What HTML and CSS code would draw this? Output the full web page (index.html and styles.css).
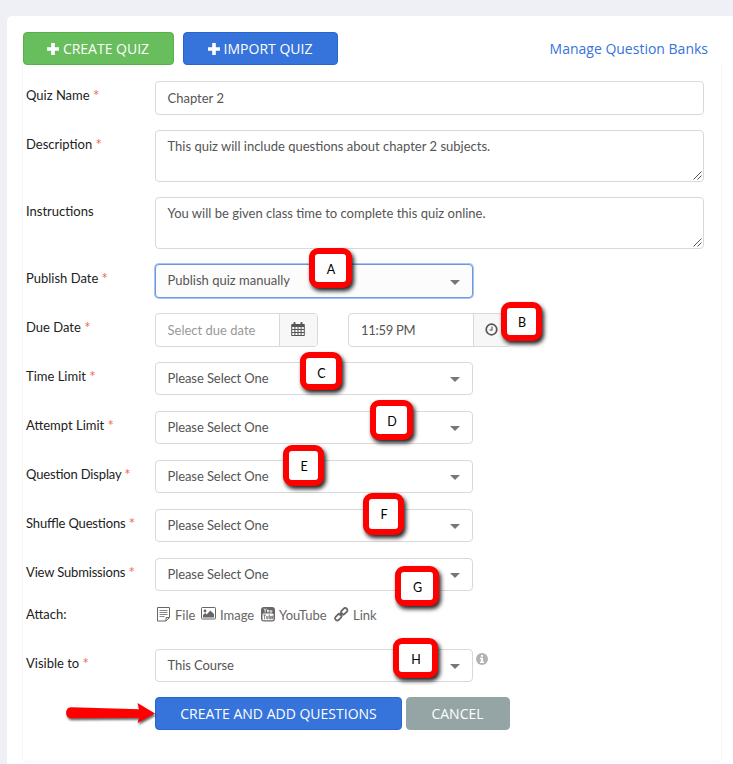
FILE: index.html
```html
<!DOCTYPE html>
<html lang="en">
<head>
<meta charset="utf-8">
<title>Create Quiz</title>
<link rel="stylesheet" href="styles.css">
</head>
<body>
<main class="card">
  <header class="toolbar">
    <button class="btn green create"><svg class="plus" viewBox="0 0 12 12"><path d="M4.2 0h3.6v4.2H12v3.6H7.8V12H4.2V7.8H0V4.2h4.2z"/></svg><span>CREATE QUIZ</span></button>
    <button class="btn blue import"><svg class="plus" viewBox="0 0 12 12"><path d="M4.2 0h3.6v4.2H12v3.6H7.8V12H4.2V7.8H0V4.2h4.2z"/></svg><span>IMPORT QUIZ</span></button>
    <a class="manage">Manage Question Banks</a>
  </header>
  <form class="panel">
    <div class="row"><label>Quiz Name <i>*</i></label><div class="field wide"><span>Chapter 2</span></div></div>
    <div class="row tall"><label>Description <i>*</i></label><div class="field wide area"><span>This quiz will include questions about chapter 2 subjects.</span><svg class="grip" viewBox="0 0 9 9"><path d="M.5 8.500l8-8M4.500 8.500l4-4"/></svg></div></div>
    <div class="row tall"><label>Instructions</label><div class="field wide area"><span>You will be given class time to complete this quiz online.</span><svg class="grip" viewBox="0 0 9 9"><path d="M.5 8.500l8-8M4.500 8.500l4-4"/></svg></div></div>
    <div class="row"><label>Publish Date <i>*</i></label><div class="field select focus"><span>Publish quiz manually</span><b class="caret"></b></div></div>
    <div class="row"><label>Due Date <i>*</i></label>
      <div class="group date"><span class="hint">Select due date</span><div class="addon"><svg width="14" height="14" viewBox="0 0 14 14"><path fill="#555" fill-rule="evenodd" d="M1 2h1.500V.8q0-.8 1-.8t1 .8V2h5V.8q0-.8 1-.8t1 .8V2H13q.8 0 .8.8v10.400q0 .8-.8.8H1q-.8 0-.8-.8V2.800Q.2 2 1 2zM1.200 5v2h2.200V5zm3.200 0v2h2.100V5zm3.100 0v2h2.100V5zm3.100 0v2h2.200V5zM1.200 8v2h2.200V8zm3.200 0v2h2.100V8zm3.100 0v2h2.100V8zm3.100 0v2h2.200V8zM1.200 11v2h2.200v-2zm3.200 0v2h2.100v-2zm3.100 0v2h2.100v-2zm3.100 0v2h2.200v-2z"/></svg></div></div>
      <div class="group time"><span class="clock">11:59 PM</span><div class="addon"><svg width="13" height="13" viewBox="0 0 13 13" fill="none" stroke="#555"><circle cx="6.500" cy="6.500" r="5.300" stroke-width="1.700"/><path d="M7 3.500v3.500H4.500" stroke-width="1.100"/></svg></div></div>
    </div>
    <div class="row"><label>Time Limit <i>*</i></label><div class="field select"><span>Please Select One</span><b class="caret"></b></div></div>
    <div class="row"><label>Attempt Limit <i>*</i></label><div class="field select"><span>Please Select One</span><b class="caret"></b></div></div>
    <div class="row"><label class="snug">Question Display <i>*</i></label><div class="field select"><span>Please Select One</span><b class="caret"></b></div></div>
    <div class="row"><label class="snug">Shuffle Questions <i>*</i></label><div class="field select"><span>Please Select One</span><b class="caret"></b></div></div>
    <div class="row"><label class="snug">View Submissions <i>*</i></label><div class="field select"><span>Please Select One</span><b class="caret"></b></div></div>
    <div class="row attach"><label>Attach:</label>
      <div class="links">
        <a class="file"><svg width="14" height="15" viewBox="0 0 14 15" fill="none" stroke="#666"><path d="M.5.5h12v10l-3.500 3.500H.5zM12.500 10.500H9V14"/><path d="M2.500 3.500h8M2.500 5.500h8M2.500 7.500h8M2.500 9.500h5" stroke="#888"/></svg><span>File</span></a>
        <a class="image"><svg width="15" height="13" viewBox="0 0 15 13"><rect x=".5" y=".5" width="14" height="11.500" rx=".7" fill="#fff" stroke="#666"/><circle cx="4" cy="4" r="1.400" fill="#666"/><path fill="#666" d="M2 10.500V8l2.200-2 1.500 1.500L9.300 3.500 13 7v3.500z"/></svg><span>Image</span></a>
        <a class="youtube"><svg width="14" height="15" viewBox="0 0 14 15"><rect width="14" height="14.500" rx="3" fill="#666"/><path d="M3 1.500l1.200 2 1.200-2M4.200 3.500v2M6.500 3v2h1.200V3zM9.300 3v2.200h1.500V3" fill="none" stroke="#fff" stroke-width=".8"/><rect x="1.500" y="6.500" width="11" height="6.800" rx="1" fill="#fff"/><path d="M2.300 8H5M3.600 8v4.300M5.700 9v2.800h1.200V9M8.200 7.300v4.500h1.300V9.300H8.200M12 11.800h-1.300V9.200H12v1.300h-1.300" fill="none" stroke="#666" stroke-width=".8"/></svg><span>YouTube</span></a>
        <a class="link"><svg width="15" height="15" viewBox="0 0 15 15" fill="none" stroke="#666" stroke-width="1.800"><rect x="-3.600" y="-2.200" width="7.200" height="4.400" rx="2" transform="translate(10.200 4.300) rotate(-45)"/><rect x="-3.600" y="-2.200" width="7.200" height="4.400" rx="2" transform="translate(4.300 10.200) rotate(-45)"/><path d="M5.800 8.800l3-3"/></svg><span>Link</span></a>
      </div>
    </div>
    <div class="row visible"><label>Visible to <i>*</i></label><div class="field select"><span>This Course</span><b class="caret"></b></div><svg class="info" width="12" height="12" viewBox="0 0 12 12"><circle cx="6" cy="6" r="6" fill="#b3b3b3"/><path fill="#fff" d="M5 2h2v1.700H5zM4 4.800h3v3.700h1V10H4V8.500h1V6.200H4z"/></svg></div>
    <div class="row actions"><button class="btn blue submit" type="button"><span>CREATE AND ADD QUESTIONS</span></button><button class="btn gray cancel" type="button"><span>CANCEL</span></button></div>
  </form>
</main>
<div class="mark a">A</div>
<div class="mark b">B</div>
<div class="mark c">C</div>
<div class="mark d">D</div>
<div class="mark e">E</div>
<div class="mark f">F</div>
<div class="mark g">G</div>
<div class="mark h">H</div>
<svg class="arrow" width="96" height="32" viewBox="0 0 96 32"><path fill="#ff0000" d="M9 7.200L77 9.200 75.500 3 93 13.500 75.500 23 77 17.700 9 18.200C2.500 18 2.500 7.500 9 7.200z"/></svg>
</body>
</html>
```
FILE: styles.css
```css
* { box-sizing: border-box; }
body { margin: 0; height: 764px; overflow: hidden; position: relative; background: #eff0f5; padding: 16px 0 0 7px; font: 13px/18px "Lato", "Liberation Sans", sans-serif; color: #222; }
.card { height: 760px; background: #fff; border-radius: 5px 0 0 0; padding: 16px 12px 0 15px; }
.toolbar { display: flex; height: 33px; }
.btn { height: 33px; padding: 0; display: flex; align-items: center; justify-content: center; border: 1px solid; border-radius: 4px; color: #fff; font: 14px/20px "Open Sans", sans-serif; white-space: nowrap; }
.green { background: #68bd5c; border-color: #57b149; width: 151px; margin: 0 9px 0 1px; }
.blue { background: #3673db; border-color: #2566cf; }
.import { width: 155px; }
.toolbar .btn { padding-right: 1px; }
.plus { width: 12px; height: 12px; fill: #fff; margin-right: 4px; }
.manage { margin: 7px 13px 0 auto; font: 14px/20px "Open Sans", sans-serif; color: #3673db; white-space: nowrap; }
.panel { height: 697px; margin: 0; width: 700px; border: 1px solid #f7f7f7; border-top: 0; border-radius: 0 0 4px 4px; padding: 16px 0 0 3px; display: flex; flex-direction: column; gap: 15px; }
.row { display: flex; height: 34px; flex: none; white-space: nowrap; }
.tall { height: 52px; }
label { width: 129px; flex: none; padding-top: 5px; }
.snug { letter-spacing: -.16px; font-feature-settings: "liga" 1; }
label i { font-style: normal; font-size: 15px; line-height: 1px; color: #f26b50; position: relative; top: 1px; }
.field { height: 34px; border: 1px solid #d9d9d9; border-radius: 4px; color: #555; padding: 0 12px; display: flex; align-items: center; background: #fff; }
.wide { width: 549px; }
.field > span, .hint { margin-left: -.5px; }
.area { height: 52px; align-items: flex-start; padding-top: 6px; position: relative; }
.grip { position: absolute; right: 1px; bottom: 1px; width: 9px; height: 9px; fill: none; stroke: #555; stroke-width: 1; }
.select { width: 318px; height: 33px; justify-content: space-between; }
.select > span { padding-bottom: 1px; letter-spacing: -.08px; }
.focus { height: 34px; background: #fcfcfc; border-color: #6d97de; box-shadow: 0 0 0 1px #a9c4f5; }
.focus > span { padding-bottom: 2px; letter-spacing: 0; }
.caret { border: 5px solid transparent; border-top-color: #777; border-bottom: 0; margin-top: 2px; }
.group { height: 34px; display: flex; align-items: center; justify-content: space-between; border: 1px solid #d9d9d9; border-radius: 4px; color: #555; padding-left: 12px; overflow: hidden; }
.date { width: 163px; margin-right: 30px; }
.time { width: 163px; }
.hint { color: #999; }
.clock { letter-spacing: -.3px; }
.addon { width: 38px; height: 32px; border-left: 1px solid #d9d9d9; background: #f7f7f7; display: flex; align-items: center; justify-content: center; padding: 0 1px 2px 0; }
.time .addon { width: 37px; }
.attach { height: 27px; }
.attach label { padding-top: 0; margin-top: -2px; }
.links { display: flex; color: #666; padding-left: 2px; height: 18px; margin-top: -1px; }
.links a { display: flex; align-items: flex-start; }
.links svg { margin: 1px 4px 0 0; }
.file { width: 44px; }
.image { width: 60px; }
.youtube { width: 73px; }
.visible { height: 33px; }
.info { margin: 4px 0 0 3px; }
.actions { padding-left: 129px; gap: 4px; height: 33px; }
.submit { width: 247px; }
.cancel { width: 104px; padding-right: 1px; }
.gray { background: #95a5a5; border-color: #95a5a5; }
.mark { position: absolute; border: 6px solid #ff0000; border-radius: 9px; background: #fff; color: #000; display: flex; align-items: center; justify-content: center; box-shadow: 2px 3px 4px #222; font-size: 12.5px; padding-left: 1px; }
.a { left: 309px; top: 248px; width: 43px; height: 40px; padding-top: 3px; }
.b { left: 501px; top: 302px; width: 41px; height: 39px; padding-top: 3px; }
.c { left: 300px; top: 352px; width: 42px; height: 38px; padding-top: 5px; }
.d { left: 370px; top: 400px; width: 43px; height: 40px; padding-top: 3px; }
.e { left: 283px; top: 445px; width: 41px; height: 41px; padding-top: 2px; }
.f { left: 363px; top: 493px; width: 41px; height: 42px; padding-top: 1px; }
.g { left: 395px; top: 566px; width: 44px; height: 40px; padding-top: 3px; }
.h { left: 393px; top: 638px; width: 45px; height: 40px; padding-top: 3px; }
.arrow { position: absolute; left: 62px; top: 700px; filter: drop-shadow(1px 2px 1px rgba(0,0,0,.6)); }
```
